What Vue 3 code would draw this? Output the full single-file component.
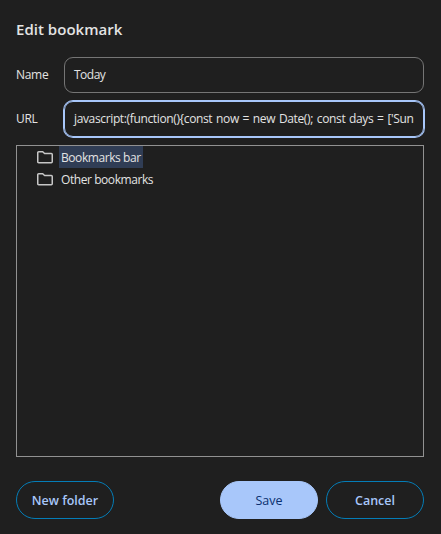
<script setup>
import { ref } from 'vue'

const name = ref('Today')
const url = ref("javascript:(function(){const now = new Date(); const days = ['Sun")
const folders = ['Bookmarks bar', 'Other bookmarks']
const selected = ref(0)
</script>

<template>
  <main class="dialog">
    <h1 class="title"><span>Edit bookmark</span></h1>
    <div class="field">
      <span class="label name-label">Name</span>
      <div class="input"><span class="name-value">{{ name }}</span></div>
    </div>
    <div class="field">
      <span class="label url-label">URL</span>
      <div class="input focused"><span class="url-value">{{ url }}</span></div>
    </div>
    <div class="tree">
      <div v-for="(folder, i) in folders" :key="folder" class="row" @click="selected = i">
        <svg class="icon" width="16" height="13" viewBox="0 0 16 13" fill="none" stroke="#c7c7c7" stroke-width="1.5">
          <path d="M1.7 .75H5.7L7.6 2.5H14.3Q15.25 2.5 15.25 3.4V10.8Q15.25 11.7 14.3 11.7H1.7Q.75 11.7 .75 10.8V1.7Q.75 .75 1.7 .75Z" />
        </svg>
        <span class="folder" :class="{ selected: i === selected }">{{ folder }}</span>
      </div>
    </div>
    <footer class="actions">
      <button class="button new-folder"><span>New folder</span></button>
      <button class="button primary"><span>Save</span></button>
      <button class="button"><span>Cancel</span></button>
    </footer>
  </main>
</template>

<style>
body {
  margin: 0;
  background: #1f1f1f;
}
</style>

<style scoped>
.dialog {
  box-sizing: border-box;
  width: 441px;
  height: 534px;
  padding: 18px 17px 15px 16px;
  display: flex;
  flex-direction: column;
  background: #1f1f1f;
  color: #e3e3e3;
  font: 12px/16px "Segoe UI", "Open Sans", sans-serif;
  overflow: hidden;
}
.title {
  margin: 0 0 17px;
  font-size: 15px;
  line-height: 22px;
  font-weight: 600;
  letter-spacing: 0.03px;
}
.field {
  display: flex;
  align-items: center;
  height: 36px;
  margin-bottom: 8px;
}
.label {
  width: 48px;
  flex: none;
  letter-spacing: -0.3px;
}
.input {
  box-sizing: border-box;
  width: 360px;
  height: 36px;
  padding: 0 9px;
  display: flex;
  align-items: center;
  border: 1px solid #757575;
  border-radius: 9px;
  white-space: pre;
}
.name-value {
  letter-spacing: -0.5px;
}
.input.focused {
  border-color: #a8c7fa;
  box-shadow: 0 0 0 1px #a8c7fa;
}
.url-value {
  letter-spacing: -0.36px;
  word-spacing: 1px;
}
.tree {
  box-sizing: border-box;
  width: 408px;
  height: 312px;
  border: 1px solid #919191;
}
.row {
  display: flex;
  align-items: center;
  height: 22px;
  padding-left: 20px;
}
.icon {
  margin-right: 6px;
}
.folder {
  box-sizing: border-box;
  height: 22px;
  line-height: 22px;
  padding: 1px 2px 0;
  letter-spacing: -0.43px;
}
.folder.selected {
  background: #303d55;
}
.actions {
  display: flex;
  gap: 8px;
  margin-top: 24px;
}
.button {
  box-sizing: border-box;
  width: 98px;
  height: 38px;
  padding: 2px 0 0;
  border: 1px solid #047db7;
  border-radius: 19px;
  background: transparent;
  color: #a8c7fa;
  font: 600 12.5px/18px "Segoe UI", "Open Sans", sans-serif;
}
.new-folder {
  margin-right: auto;
}
.primary {
  background: #a8c7fa;
  border-color: #a8c7fa;
  color: #0a306f;
  font-weight: 500;
}
</style>
